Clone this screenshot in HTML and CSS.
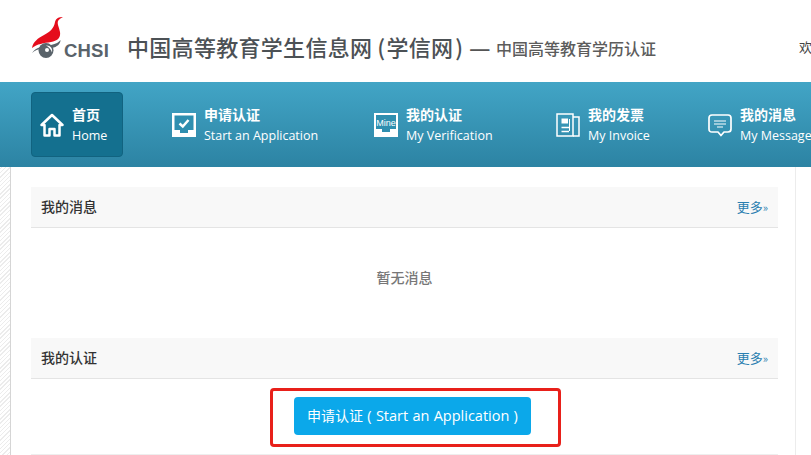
FILE: index.html
```html
<!DOCTYPE html>
<html lang="zh-CN">
<head>
<meta charset="utf-8">
<title>学信网</title>
<link rel="stylesheet" href="styles.css">
</head>
<body>
<header class="top">
  <div class="logo">
    <svg class="bird" width="33" height="42" viewBox="0 0 33 42">
      <path fill="#e50d1c" d="M32 0 C28 0 25 1 24 5 C23 11 19 15 13 18 C7 21 2 25 1 31 C6 27 13 26 20 25 C26 24 30 21 29 15 C28 10 26 7 27 4 C28 2 30 1 32 0Z"/>
      <path fill="#59636a" d="M1 36 C5 30 13 29 20 28 C25 27 28 25 29.500 23 C29.500 27 26 30 21 31 C14 31 7 31 1 36Z"/>
      <circle cx="15" cy="33.500" r="7.500" fill="#59636a"/>
      <path fill="#fff" d="M15 28.500 C19 28 22 31 21 35.500 C20 32.500 18 30 15 28.500Z"/>
      <circle cx="16" cy="33" r="2" fill="#fff"/>
    </svg>
    <span class="logo-text">CHSI</span>
  </div>
  <h1 class="site-name">中国高等教育学生信息网<span class="paren-l">(</span>学信网<span class="paren-r">)</span></h1>
  <span class="dash">—</span>
  <span class="sub-name">中国高等教育学历认证</span>
  <span class="welcome">欢迎您</span>
</header>
<nav class="nav">
  <a class="nav-item nav-home">
    <svg class="ico" width="24" height="24" viewBox="0 0 24 24"><path fill="none" stroke="#fff" stroke-width="2.500" stroke-linejoin="round" d="M1.500 12 L12 2 L22.500 12 L19.500 12 L19.500 22.500 L14.500 22.500 L14.500 16 L9.500 16 L9.500 22.500 L4.500 22.500 L4.500 12Z"/></svg>
    <span class="labels"><b>首页</b><span>Home</span></span>
  </a>
  <a class="nav-item nav-apply">
    <svg class="ico" width="24" height="24" viewBox="0 0 24 24"><path fill="#fff" d="M0 0H24V24H0Z"/><path fill="#2f8fb0" d="M2.500 2.500H21.500V17H16V20H8V17H2.500Z"/><path fill="none" stroke="#fff" stroke-width="2.500" d="M7.500 10.500 L10.800 13.500 L16.500 7"/></svg>
    <span class="labels"><b>申请认证</b><span>Start an Application</span></span>
  </a>
  <a class="nav-item nav-verify">
    <svg class="ico" width="24" height="24" viewBox="0 0 24 24"><path fill="#fff" d="M0 0H24V24H0Z"/><path fill="#2f8fb0" d="M2 2H22V16H16V19H8V16H2Z"/><text class="mine" x="12" y="13" text-anchor="middle">Mine</text></svg>
    <span class="labels"><b>我的认证</b><span>My Verification</span></span>
  </a>
  <a class="nav-item nav-invoice">
    <svg class="ico" width="24" height="24" viewBox="0 0 24 24"><g fill="none" stroke="#fff" stroke-width="1.500"><path d="M1 1 H17 V23 H1Z"/><path d="M17 4 H23 V23 H17"/><path d="M5.500 14.500H13M5.500 18.500H13"/><path d="M13.500 6V18" stroke-width="1"/></g><path fill="#fff" d="M5.500 5.500H12V10.500H5.500Z"/></svg>
    <span class="labels"><b>我的发票</b><span>My Invoice</span></span>
  </a>
  <a class="nav-item nav-msg">
    <svg class="ico" width="24" height="24" viewBox="0 0 24 24"><path fill="none" stroke="#fff" stroke-width="1.700" stroke-linejoin="round" d="M4 2 H20 Q23 2 23 5 V16 Q23 19 20 19 H16 L13 22.500 L10 19 H4 Q1 19 1 16 V5 Q1 2 4 2Z"/><path fill="none" stroke="#fff" stroke-width="1.200" d="M6 8H18M6 11H18M9 14H15"/></svg>
    <span class="labels"><b>我的消息</b><span>My Message</span></span>
  </a>
</nav>
<div class="page">
  <main class="main">
    <section class="panel panel-msg">
      <div class="panel-head"><h2>我的消息</h2><a class="more">更多<small>»</small></a></div>
      <p class="empty">暂无消息</p>
    </section>
    <section class="panel">
      <div class="panel-head"><h2>我的认证</h2><a class="more">更多<small>»</small></a></div>
      <div class="action"><a class="btn"><span class="btn-cjk">申请认证</span> ( Start an Application )</a></div>
    </section>
  </main>
</div>
<div class="annot"></div>
</body>
</html>
```
FILE: styles.css
```css
html {
  background: repeating-linear-gradient(135deg, #fff 0 2px, #ececec 2px 3px);
}
html, body {
  margin: 0;
  height: 455px;
  overflow: hidden;
  font-family: "Noto Sans CJK SC", "Liberation Sans", sans-serif;
}
body { background: transparent; }
.top {
  height: 82px;
  display: flex;
  align-items: center;
  padding-left: 31px;
  box-sizing: border-box;
  white-space: nowrap;
  color: #555;
  background: #fff;
}
.logo {
  display: flex;
  align-items: flex-end;
  flex: none;
  width: 96px;
  height: 42px;
  margin-top: -6px;
}
.bird { flex: none; }
.logo-text {
  font: bold 18.500px/17px "Liberation Sans", sans-serif;
  color: #59636a;
  letter-spacing: 0.2px;
}
.site-name {
  margin: 10px 0 0;
  flex: none;
  font-size: 22px;
  font-weight: 500;
  letter-spacing: 0.3px;
  color: #4c5155;
  width: 344px;
}
.paren-l { margin: 0 1px 0 5px; }
.paren-r { margin-left: 2px; }
.dash {
  flex: none;
  font-size: 24px;
  line-height: 30px;
  font-weight: 500;
  color: #555;
  margin-top: 11px;
  margin-left: -2px;
  width: 27px;
}
.sub-name {
  flex: none;
  font-size: 16px;
  font-weight: 500;
  color: #5c5c5c;
  margin-top: 14px;
  width: 303px;
}
.welcome {
  font-size: 13px;
  color: #444;
  margin-top: 10px;
}
.nav {
  height: 85px;
  background: linear-gradient(#42a5c6, #2c83a3);
  display: flex;
  align-items: center;
  padding-left: 31px;
  box-sizing: border-box;
  white-space: nowrap;
  color: #fff;
  overflow: hidden;
}
.nav-item {
  display: flex;
  align-items: center;
  gap: 8px;
  height: 65px;
  flex: none;
}
.nav-home {
  width: 92px;
  box-sizing: border-box;
  padding-left: 8px;
  background: #14708f;
  border: 1px solid #116380;
  border-radius: 4px;
}
.nav-apply { margin-left: 49px; width: 202px; }
.nav-verify { width: 182px; }
.nav-invoice { width: 152px; }
.labels {
  display: flex;
  flex-direction: column;
  gap: 4px;
  margin-top: 1px;
  font-size: 12.500px;
  line-height: 18px;
  font-family: "Open Sans", "Noto Sans CJK SC", sans-serif;
}
.labels b {
  font-family: "Noto Sans CJK SC", sans-serif;
  font-weight: 700;
  font-size: 14px;
}
.ico { flex: none; }
.mine {
  font: 9px "Liberation Sans", sans-serif;
  fill: #fff;
}
.page {
  height: 288px;
  margin-left: 10px;
  width: 786px;
  box-sizing: border-box;
  background: #fff;
  box-shadow: 15px 0 0 #fff;
  border-left: 1px solid #d5d5d5;
  border-right: 1px solid #ececec;
  padding: 20px 17px 0 20px;
}
.panel-head {
  height: 40px;
  background: #f8f8f8;
  border-bottom: 1px solid #e4e4e4;
  display: flex;
  align-items: center;
  justify-content: space-between;
  padding: 0 10px;
}
.panel-head h2 {
  margin: -3px 0 0;
  font-size: 14px;
  line-height: 18px;
  font-weight: 500;
  color: #333;
}
.more {
  font-size: 13px;
  line-height: 18px;
  margin-top: -1px;
  color: #2a7fb0;
}
.more small { font-size: 11px; }
.empty {
  margin: 0;
  height: 110px;
  box-sizing: border-box;
  padding-top: 40px;
  line-height: 18px;
  text-align: center;
  font-size: 14px;
  font-weight: 500;
  color: #777;
}
.action {
  display: flex;
  justify-content: center;
  padding-top: 18px;
  padding-left: 16px;
  height: 76px;
  box-sizing: border-box;
  border-bottom: 1px solid #eee;
}
.btn {
  height: 38px;
  width: 237px;
  background: #0ba8ea;
  border-radius: 4px;
  color: #fff;
  font: 14.500px/36px "Open Sans", "Noto Sans CJK SC", sans-serif;
  word-spacing: 0.5px;
  text-align: center;
  white-space: nowrap;
}
.btn-cjk { font-size: 14px; font-family: "Noto Sans CJK SC", sans-serif; }
.annot {
  position: absolute;
  left: 270px;
  top: 388px;
  width: 291px;
  height: 59px;
  box-sizing: border-box;
  border: 3px solid #e8201a;
  border-radius: 4px;
}
```
